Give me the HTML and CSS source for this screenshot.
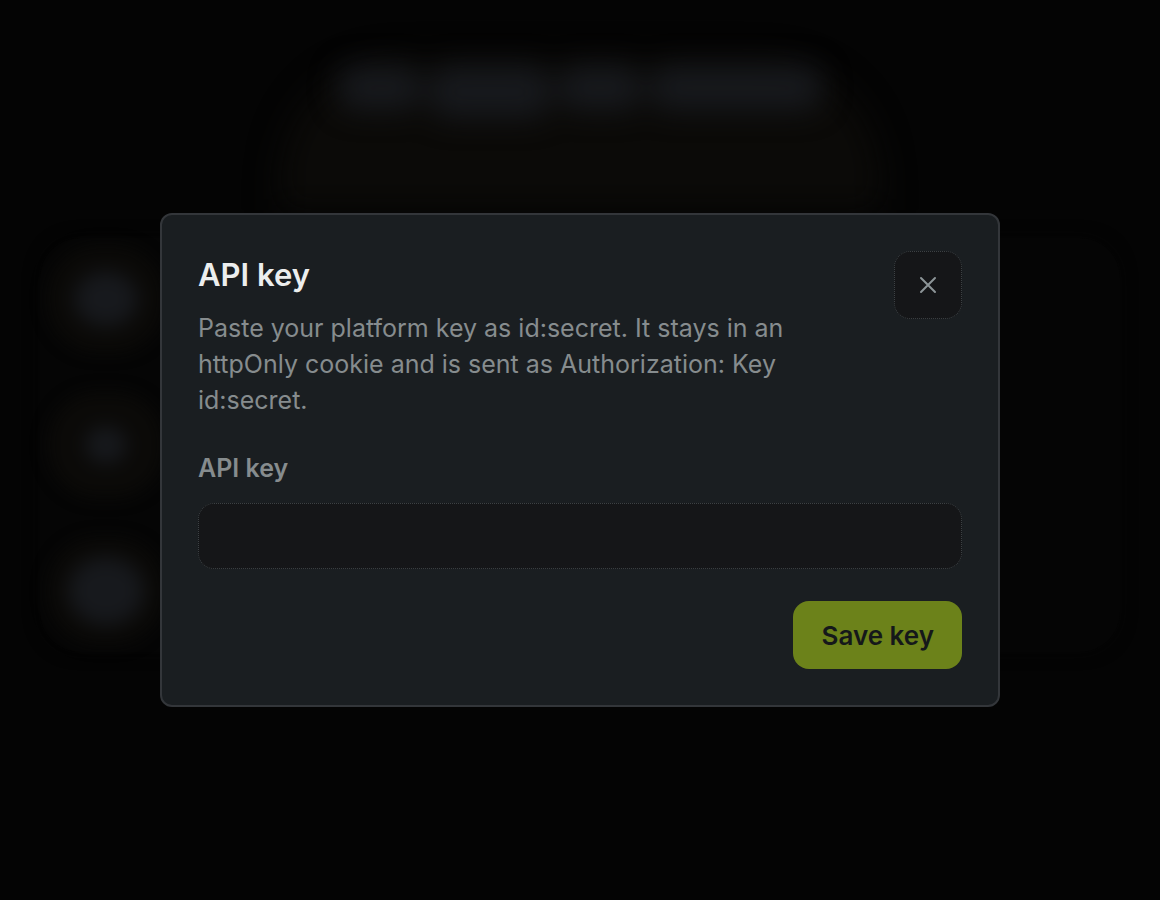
FILE: index.html
```html
<!DOCTYPE html>
<html lang="en">
<head>
<meta charset="utf-8">
<meta name="viewport" content="width=device-width, initial-scale=1">
<title>API key</title>
<link rel="stylesheet" href="styles.css">
</head>
<body>
<div class="backdrop" aria-hidden="true">
  <div class="hero">
    <div class="hero-glow"></div>
    <div class="headline"><span class="word word-short"></span><span class="word word-tall"></span><span class="word word-short"></span><span class="word word-long"></span></div>
  </div>
  <div class="panel">
    <div class="step"><span class="dot"></span></div>
    <div class="step"><span class="dot dot-small"></span></div>
    <div class="step"><span class="dot dot-large"></span></div>
  </div>
</div>
<div class="overlay">
  <section class="dialog" role="dialog" aria-modal="true" aria-labelledby="dialog-title" aria-describedby="dialog-text">
    <header class="dialog-header">
      <div class="dialog-heading">
        <h2 class="dialog-title" id="dialog-title">API key</h2>
        <p class="dialog-text" id="dialog-text">Paste your platform key as id:secret. It stays in an httpOnly cookie and is sent as Authorization: Key id:secret.</p>
      </div>
      <button class="close" type="button" aria-label="Close">
        <svg class="close-icon" viewBox="0 0 16 16" aria-hidden="true"><path d="M1 1 15 15M15 1 1 15"/></svg>
      </button>
    </header>
    <form class="form">
      <label class="label" for="api-key">API key</label>
      <input class="input" id="api-key" type="password" autocomplete="off">
      <button class="save" type="submit">Save key</button>
    </form>
  </section>
</div>
</body>
</html>
```
FILE: styles.css
```css
* {
  box-sizing: border-box;
}

body {
  margin: 0;
  background: #040404;
  color: #eceeee;
  font-family: Inter, "Liberation Sans", sans-serif;
}

.backdrop {
  height: 100vh;
  overflow: hidden;
}

.hero {
  display: grid;
  justify-items: center;
  height: 230px;
}

.hero > * {
  grid-area: 1 / 1;
}

.hero-glow {
  width: 600px;
  height: 150px;
  margin-top: 60px;
  border-radius: 120px 120px 0 0;
  background: #0b0a08;
  filter: blur(16px);
}

.headline {
  display: flex;
  align-items: flex-start;
  gap: 8px;
  width: 484px;
  margin-top: 66px;
  filter: blur(14px);
}

.word {
  flex: 1;
  height: 44px;
  border-radius: 20px;
  background: #17191d;
}

.word-short {
  flex: 0 0 84px;
}

.word-tall {
  flex: 0 0 120px;
  height: 52px;
}

.panel {
  display: flex;
  flex-direction: column;
  gap: 40px;
  margin: 8px 40px 0;
  padding: 8px;
  border-radius: 40px;
  background: #050505;
  box-shadow: 0 0 16px #050505;
}

.step {
  display: flex;
  align-items: center;
  justify-content: center;
  width: 116px;
  height: 106px;
  border-radius: 50px;
  background: #0b0a08;
  filter: blur(8px);
}

.dot {
  width: 64px;
  height: 56px;
  border-radius: 50%;
  background: #17191d;
  filter: blur(6px);
}

.dot-small {
  width: 42px;
  height: 38px;
}

.dot-large {
  width: 76px;
  height: 68px;
}

.overlay {
  position: fixed;
  inset: 0;
  display: flex;
  align-items: center;
  justify-content: center;
  padding: 40px 20px 20px;
}

.dialog {
  width: 100%;
  max-width: 840px;
  padding: 36px;
  border: 2px solid #33363a;
  border-radius: 12px;
  background: #1a1e21;
}

.dialog-header {
  display: flex;
  align-items: flex-start;
  justify-content: space-between;
  gap: 24px;
}

.dialog-heading {
  max-width: 640px;
}

.dialog-title {
  margin: 0 0 12px;
  font-size: 31px;
  font-weight: 600;
  line-height: 47px;
}

.dialog-text {
  margin: 0;
  color: #868c8e;
  font-size: 25px;
  line-height: 36px;
}

.close {
  display: flex;
  flex: none;
  align-items: center;
  justify-content: center;
  width: 68px;
  height: 68px;
  padding: 0;
  border: 1px dotted #3c4144;
  border-radius: 16px;
  background: #151618;
  cursor: pointer;
}

.close-icon {
  width: 16px;
  height: 16px;
  overflow: visible;
  fill: none;
  stroke: #8c9497;
  stroke-width: 2;
  stroke-linecap: round;
}

.form {
  display: flex;
  flex-direction: column;
  margin-top: 32px;
}

.label {
  margin-bottom: 17px;
  color: #868c8e;
  font-size: 25px;
  font-weight: 600;
  line-height: 36px;
}

.input {
  width: 100%;
  height: 66px;
  margin-bottom: 32px;
  padding: 0 24px;
  border: 1px dotted #3c4144;
  border-radius: 16px;
  background: #151618;
  color: #eceeee;
  font: inherit;
  font-size: 25px;
}

.save {
  align-self: flex-end;
  height: 68px;
  padding: 0 28px;
  border: 0;
  border-radius: 16px;
  background: #6c821a;
  color: #15181a;
  font: inherit;
  font-size: 26px;
  font-weight: 600;
  cursor: pointer;
}
```
